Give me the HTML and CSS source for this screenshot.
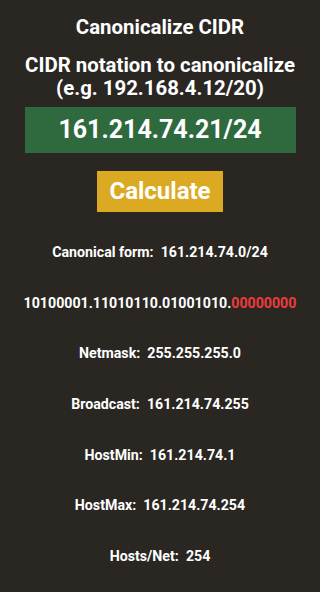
FILE: index.html
```html
<!DOCTYPE html>
<html>
<head>
<meta charset="utf-8">
<link rel="stylesheet" href="styles.css">
</head>
<body>
<div class="app">
  <div class="title">Canonicalize CIDR</div>
  <div class="label">CIDR notation to canonicalize<br>(e.g. 192.168.4.12/20)</div>
  <div class="input">161.214.74.21/24</div>
  <div class="button">Calculate</div>
  <div class="results">
    <div class="row">Canonical form:&nbsp; 161.214.74.0/24</div>
    <div class="row">10100001.11010110.01001010.<span class="host">00000000</span></div>
    <div class="row">Netmask:&nbsp; 255.255.255.0</div>
    <div class="row">Broadcast:&nbsp; 161.214.74.255</div>
    <div class="row">HostMin:&nbsp; 161.214.74.1</div>
    <div class="row">HostMax:&nbsp; 161.214.74.254</div>
    <div class="row">Hosts/Net:&nbsp; 254</div>
  </div>
</div>
</body>
</html>
```
FILE: styles.css
```css
html, body {
  margin: 0;
  padding: 0;
  background: #2a2723;
  height: 100%;
}
body {
  font-family: Roboto, "Liberation Sans", sans-serif;
  font-weight: bold;
  color: #ffffff;
}
.app {
  display: flex;
  flex-direction: column;
  align-items: center;
  padding-top: 15px;
}
.title {
  font-size: 20.4px;
  line-height: 24px;
}
.label {
  margin-top: 15px;
  font-size: 20.4px;
  line-height: 23px;
  text-align: center;
  white-space: nowrap;
}
.input {
  margin-top: 7px;
  width: 271px;
  height: 46px;
  background: #2f6a3f;
  font-size: 25px;
  line-height: 46px;
  text-align: center;
}
.button {
  margin-top: 18px;
  width: 126px;
  height: 41px;
  background: #dca923;
  font-size: 24px;
  line-height: 41px;
  text-align: center;
}
.results {
  margin-top: 31px;
  display: flex;
  flex-direction: column;
  align-items: center;
  gap: 32.7px;
}
.row {
  font-size: 14.2px;
  line-height: 18px;
  white-space: nowrap;
}
.host {
  color: #f03c3c;
}
```
